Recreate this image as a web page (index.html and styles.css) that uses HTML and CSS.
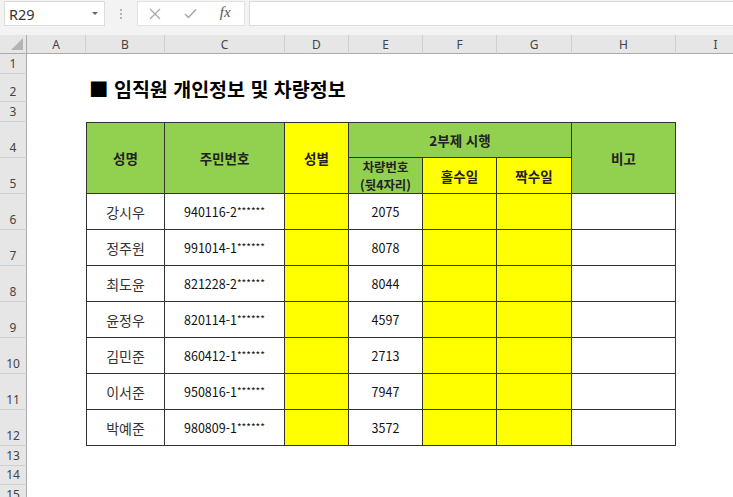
FILE: index.html
```html
<!DOCTYPE html>
<html lang="ko">
<head>
    <meta charset="UTF-8">
    <meta name="viewport" content="width=device-width, initial-scale=1.0">
    <title>임직원 개인정보 및 차량정보</title>
    <link rel="stylesheet" href="styles.css">
</head>
<body>
    <div class="toolbar">
        <div class="namebox">
            <span>R29</span>
            <span class="caret"></span>
        </div>
        <div class="grip"><i></i><i></i><i></i></div>
        <div class="fx-buttons">
            <svg width="12" height="12" viewBox="0 0 12 12"><path d="M1 1 L11 11 M11 1 L1 11" stroke="#a6a6a6" stroke-width="1.2" fill="none"/></svg>
            <svg width="13" height="11" viewBox="0 0 13 11"><path d="M1 6 L4.5 9.5 L12 1.5" stroke="#a6a6a6" stroke-width="1.5" fill="none"/></svg>
            <span class="fx">fx</span>
        </div>
        <div class="formula"></div>
    </div>

    <div class="sheet">
        <!-- column headers -->
        <div class="corner"><span></span></div>
        <div class="ch">A</div>
        <div class="ch">B</div>
        <div class="ch">C</div>
        <div class="ch">D</div>
        <div class="ch">E</div>
        <div class="ch">F</div>
        <div class="ch">G</div>
        <div class="ch">H</div>
        <div class="ch">I</div>

        <div class="rh">1</div><div class="blank"></div>

        <div class="rh">2</div><div></div>
        <div class="title">■ 임직원 개인정보 및 차량정보</div>

        <div class="rh">3</div><div class="blank"></div>

        <!-- table header -->
        <div class="rh">4</div><div></div>
        <div class="c head green top left tall">성명</div>
        <div class="c head green top tall">주민번호</div>
        <div class="c head yellow top tall">성별</div>
        <div class="c head green top wide">2부제 시행</div>
        <div class="c head green top tall">비고</div>
        <div></div>

        <div class="rh">5</div><div></div>
        <div class="c head green two"><span>차량번호</span><span>(뒷4자리)</span></div>
        <div class="c head yellow">홀수일</div>
        <div class="c head yellow">짝수일</div>
        <div></div>

        <!-- data rows -->
        <div class="rh">6</div><div></div>
        <div class="c left name">강시우</div><div class="c">940116-2<small>******</small></div>
        <div class="c yellow"></div><div class="c">2075</div>
        <div class="c yellow"></div><div class="c yellow"></div><div class="c"></div><div></div>

        <div class="rh">7</div><div></div>
        <div class="c left name">정주원</div><div class="c">991014-1<small>******</small></div>
        <div class="c yellow"></div><div class="c">8078</div>
        <div class="c yellow"></div><div class="c yellow"></div><div class="c"></div><div></div>

        <div class="rh">8</div><div></div>
        <div class="c left name">최도윤</div><div class="c">821228-2<small>******</small></div>
        <div class="c yellow"></div><div class="c">8044</div>
        <div class="c yellow"></div><div class="c yellow"></div><div class="c"></div><div></div>

        <div class="rh">9</div><div></div>
        <div class="c left name">윤정우</div><div class="c">820114-1<small>******</small></div>
        <div class="c yellow"></div><div class="c">4597</div>
        <div class="c yellow"></div><div class="c yellow"></div><div class="c"></div><div></div>

        <div class="rh">10</div><div></div>
        <div class="c left name">김민준</div><div class="c">860412-1<small>******</small></div>
        <div class="c yellow"></div><div class="c">2713</div>
        <div class="c yellow"></div><div class="c yellow"></div><div class="c"></div><div></div>

        <div class="rh">11</div><div></div>
        <div class="c left name">이서준</div><div class="c">950816-1<small>******</small></div>
        <div class="c yellow"></div><div class="c">7947</div>
        <div class="c yellow"></div><div class="c yellow"></div><div class="c"></div><div></div>

        <div class="rh">12</div><div></div>
        <div class="c left name">박예준</div><div class="c">980809-1<small>******</small></div>
        <div class="c yellow"></div><div class="c">3572</div>
        <div class="c yellow"></div><div class="c yellow"></div><div class="c"></div><div></div>

        <div class="rh">13</div><div class="blank"></div>
        <div class="rh">14</div><div class="blank"></div>
        <div class="rh">15</div><div class="blank"></div>
    </div>
</body>
</html>
```

FILE: styles.css
```css
* {
    box-sizing: border-box;
    margin: 0;
    padding: 0;
}

body {
    width: 733px;
    height: 497px;
    overflow: hidden;
    background-color: #fff;
    font-family: 'Noto Sans', 'Noto Sans CJK KR', sans-serif;
    color: #222;
}

/* formula bar */

.toolbar {
    height: 35px;
    background-color: #f3f3f3;
    display: flex;
    align-items: flex-start;
    padding-top: 1px;
}

.namebox {
    width: 101px;
    height: 25px;
    margin-left: 4px;
    background-color: #fff;
    border: 1px solid #dcdcdc;
    display: flex;
    align-items: center;
    justify-content: space-between;
    padding: 0 6px 0 4px;
    font-size: 14.5px;
    color: #333;
}

.caret {
    width: 0;
    height: 0;
    border-left: 3px solid transparent;
    border-right: 3px solid transparent;
    border-top: 3px solid #666;
}

.grip {
    width: 32px;
    height: 25px;
    display: flex;
    flex-direction: column;
    align-items: center;
    justify-content: center;
    gap: 2px;
}

.grip i {
    width: 2px;
    height: 2px;
    background-color: #b4b4b4;
}

.fx-buttons {
    width: 108px;
    height: 25px;
    background-color: #fff;
    border: 1px solid #e2e2e2;
    display: flex;
    align-items: center;
    justify-content: space-around;
    padding: 0 2px 0 0;
}

.fx {
    font-family: 'Liberation Serif', serif;
    font-style: italic;
    font-size: 15px;
    color: #555;
    padding-bottom: 2px;
}

.formula {
    flex: 1;
    height: 25px;
    margin-left: 4px;
    background-color: #fff;
    border: 1px solid #dcdcdc;
    border-right: none;
}

/* sheet grid */

.sheet {
    display: grid;
    grid-template-columns: 27px 59px 79px 120px 64px 74px 74px 75px 104px 80px;
    grid-template-rows: 19px 20px 28px 20px 36px 36px repeat(7, 36px) 20px 19px 20px;
}

.corner {
    background-color: #e6e6e6;
    border-right: 1px solid #ababab;
    border-bottom: 1px solid #ababab;
    position: relative;
}

.corner span {
    position: absolute;
    right: 3px;
    bottom: 3px;
    width: 0;
    height: 0;
    border-left: 12px solid transparent;
    border-bottom: 12px solid #b4b4b4;
}

.ch {
    background-color: #e6e6e6;
    border-right: 1px solid #d0d0d0;
    border-bottom: 1px solid #ababab;
    font-size: 12px;
    color: #444;
    display: flex;
    align-items: center;
    justify-content: center;
}

.rh {
    grid-column: 1;
    background-color: #e6e6e6;
    border-right: 1px solid #ababab;
    border-bottom: 1px solid #d0d0d0;
    font-size: 12px;
    color: #444;
    display: flex;
    align-items: flex-end;
    justify-content: center;
    padding-bottom: 1px;
    line-height: 16px;
}

.blank {
    grid-column: 2 / -1;
}

.title {
    grid-column: 3 / -1;
    font-family: 'Noto Sans CJK KR', sans-serif;
    font-size: 19.5px;
    font-weight: bold;
    color: #000;
    display: flex;
    align-items: flex-end;
    padding-left: 3px;
    line-height: 26px;
}

/* table cells */

.c {
    border-right: 1px solid #333;
    border-bottom: 1px solid #333;
    display: flex;
    align-items: center;
    justify-content: center;
    text-align: center;
    font-family: 'Noto Sans CJK KR', sans-serif;
    font-size: 12.5px;
    color: #111;
}

.c small {
    font-size: 10px;
    position: relative;
    top: -1px;
}

.name {
    font-size: 14px;
    color: #333;
}

.top {
    border-top: 1px solid #333;
}

.left {
    border-left: 1px solid #333;
}

.tall {
    grid-row: span 2;
}

.wide {
    grid-column: span 3;
}

.head {
    font-weight: bold;
    font-size: 13.5px;
    color: #222;
}

.two {
    flex-direction: column;
    font-size: 12.4px;
    line-height: 18px;
}

.green {
    background-color: #92d050;
}

.yellow {
    background-color: #ffff00;
}
```
